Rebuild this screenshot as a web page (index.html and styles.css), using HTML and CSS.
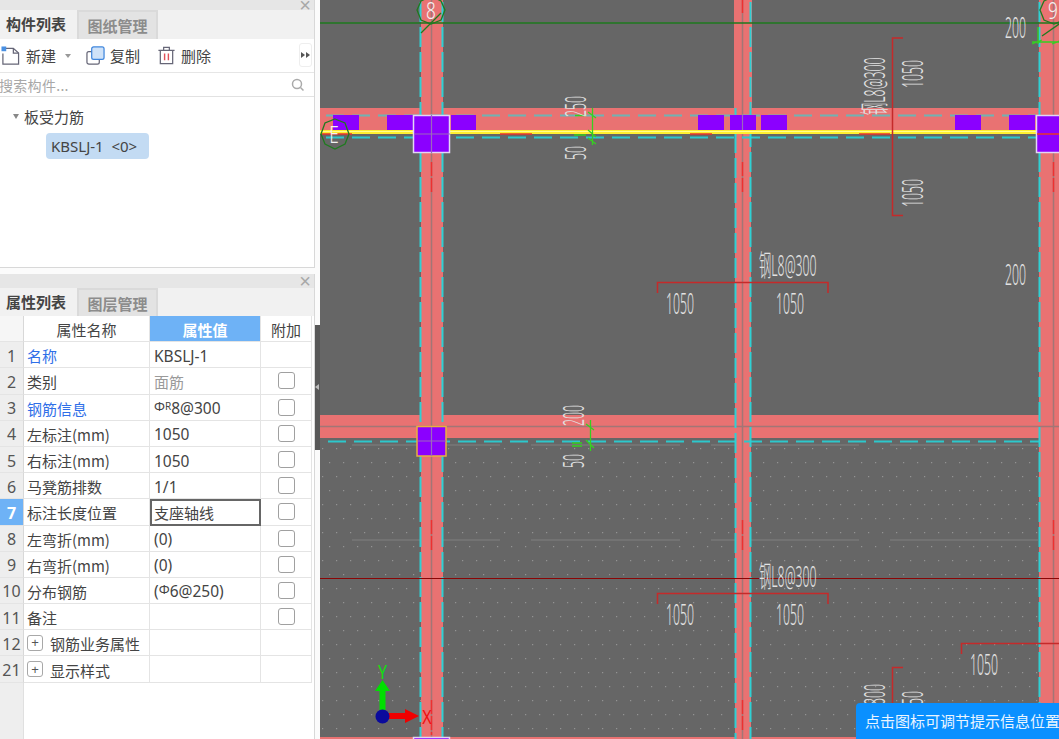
FILE: index.html
```html
<!DOCTYPE html>
<html lang="zh">
<head>
<meta charset="utf-8">
<title>构件列表</title>
<link rel="stylesheet" href="styles.css">
</head>
<body>
<div class="app">
  <aside class="side">
    <section class="panel panel-top">
      <div class="panel-head"><span class="close">×</span></div>
      <div class="tabs">
        <span class="tab active">构件列表</span>
        <span class="tab">图纸管理</span>
      </div>
      <div class="toolbar">
        <span class="tool tool-new">
          <svg class="ico" viewBox="0 0 20 20"><path class="ln" d="M3 2.500H13L18.500 7.500V19H2V8"/><path class="ln" d="M13 2.500V7.500H18.500"/><rect class="mark" x="0.500" y="0.500" width="5" height="5"/></svg>
          <span>新建</span><span class="caret"></span>
        </span>
        <span class="tool tool-copy">
          <svg class="ico" viewBox="0 0 20 20"><rect class="ln" x="1" y="6" width="13" height="13" rx="2"/><rect class="copyfront" x="6" y="1" width="13" height="13" rx="2"/></svg>
          <span>复制</span>
        </span>
        <span class="tool tool-del">
          <svg class="ico" viewBox="0 0 20 20"><path class="ln" d="M1.500 4.500H18.500M7 4.500V1.500H13V4.500M3.500 4.500V18.500H16.500V4.500"/><path class="bars" d="M8 8V15M12 8V15"/></svg>
          <span>删除</span>
        </span>
        <span class="more"><i class="mtri"></i><i class="mtri"></i></span>
      </div>
      <div class="search">
        <span>搜索构件...</span>
        <svg class="search-ico" viewBox="0 0 14 14"><circle cx="6" cy="6" r="4.500"/><path d="M9.500 9.500L12.500 12.500"/></svg>
      </div>
      <div class="tree">
        <div class="tree-root"><span class="tri"></span>板受力筋</div>
        <div class="chip">KBSLJ-1 &nbsp;&lt;0&gt;</div>
      </div>
    </section>

    <section class="panel panel-bottom">
      <div class="panel-head"><span class="close">×</span></div>
      <div class="tabs">
        <span class="tab active">属性列表</span>
        <span class="tab">图层管理</span>
      </div>
      <div class="props">
        <div class="grid">
          <div class="c num head"></div><div class="c hname">属性名称</div><div class="c hval">属性值</div><div class="c hadd">附加</div>

          <div class="c num">1</div><div class="c name blue">名称</div><div class="c val">KBSLJ-1</div><div class="c add"></div>
          <div class="c num">2</div><div class="c name">类别</div><div class="c val muted">面筋</div><div class="c add"><i class="cb"></i></div>
          <div class="c num">3</div><div class="c name blue">钢筋信息</div><div class="c val"><span class="rebar">Φ</span><sup class="rsup">R</sup>8@300</div><div class="c add"><i class="cb"></i></div>
          <div class="c num">4</div><div class="c name">左标注(mm)</div><div class="c val">1050</div><div class="c add"><i class="cb"></i></div>
          <div class="c num">5</div><div class="c name">右标注(mm)</div><div class="c val">1050</div><div class="c add"><i class="cb"></i></div>
          <div class="c num">6</div><div class="c name">马凳筋排数</div><div class="c val">1/1</div><div class="c add"><i class="cb"></i></div>
          <div class="c num sel">7</div><div class="c name">标注长度位置</div><div class="c val focus">支座轴线</div><div class="c add"><i class="cb"></i></div>
          <div class="c num">8</div><div class="c name">左弯折(mm)</div><div class="c val">(0)</div><div class="c add"><i class="cb"></i></div>
          <div class="c num">9</div><div class="c name">右弯折(mm)</div><div class="c val">(0)</div><div class="c add"><i class="cb"></i></div>
          <div class="c num">10</div><div class="c name">分布钢筋</div><div class="c val">(<span class="rebar">Φ</span>6@250)</div><div class="c add"><i class="cb"></i></div>
          <div class="c num">11</div><div class="c name">备注</div><div class="c val"></div><div class="c add"><i class="cb"></i></div>
          <div class="c num">12</div><div class="c name"><i class="plus">+</i><span class="grp">钢筋业务属性</span></div><div class="c val"></div><div class="c add"></div>
          <div class="c num">21</div><div class="c name"><i class="plus">+</i><span class="grp">显示样式</span></div><div class="c val"></div><div class="c add"></div>
        </div>
        <div class="gutter"></div>
      </div>
    </section>
    <div class="handle"><span class="handle-arrow"></span></div>
  </aside>

  <main class="canvas">
    <svg class="cad" viewBox="320 0 739 739" width="739" height="739">
      <defs>
        <pattern id="dots" width="14" height="28" patternUnits="userSpaceOnUse" x="320" y="448">
          <rect class="dot" x="2" y="0" width="1.200" height="1.200"/>
          <rect class="dot" x="9" y="14" width="1.200" height="1.200"/>
        </pattern>
      </defs>
      <rect class="bg" x="320" y="0" width="739" height="739"/>
      <rect x="320" y="445" width="739" height="294" fill="url(#dots)"/>
      <path class="faint" d="M352 445H500M531 445H680M711 445H859M890 445H1038M352 540H500M531 540H680M711 540H859M890 540H1038"/>

      <!-- beams -->
      <rect class="beam" x="320" y="108" width="739" height="23"/>
      <rect class="beam" x="320" y="415" width="739" height="23"/>
      <rect class="beam" x="421" y="0" width="22" height="739"/>
      <rect class="beam" x="734" y="0" width="18" height="108"/>
      <rect class="beam" x="735" y="108" width="16" height="631"/>
      <rect class="beam" x="1039" y="0" width="20" height="739"/>
      <rect class="beam" x="320" y="737" width="739" height="2"/>
      <path class="axis-gray" d="M431.500 0V739M742.500 0V739M1053.500 0V739"/>
      <path class="axis-gray" d="M320 426.500H1059"/>

      <!-- dashed edges -->
      <path class="dash-soft" d="M326 115.500H1036"/>
      <path class="dash" d="M326 137.500H1036M328 441.500H1039"/>
      <path class="dash-v" d="M420.500 2V739M442.500 2V739M735.500 108V739M750.500 2V739M1039.500 2V739"/>

      <!-- rebar marks -->
      <path class="red-dash" d="M431.500 162V192M431.500 520V552M431.500 700V735M742.500 0V13M742.500 162V192M742.500 520V552M742.500 700V730M1053.500 162V192M1053.500 520V552"/>

      <!-- yellow line -->
      <rect class="yellow" x="320" y="130" width="739" height="4"/>
      <rect class="yellow-in" x="320" y="131" width="739" height="1"/>
      <path class="red-line" d="M322 134H352M500 134H532M690 134H712M859 134H890"/>

      <!-- purple blocks -->
      <rect class="pu" x="333" y="115" width="26" height="15"/>
      <rect class="pu" x="387" y="115" width="26" height="15"/>
      <rect class="pu" x="451" y="115" width="25" height="15"/>
      <rect class="pu" x="698" y="115" width="26" height="15"/>
      <rect class="pu" x="730" y="115" width="26" height="15"/>
      <rect class="pu" x="761" y="115" width="26" height="15"/>
      <rect class="pu" x="955" y="115" width="26" height="15"/>
      <rect class="pu" x="1009" y="115" width="26" height="15"/>
      <rect class="pu-big" x="413.500" y="115.500" width="36" height="37"/>
      <rect class="pu-big" x="1036.500" y="115.500" width="30" height="37"/>
      <rect class="pu-org" x="417" y="426.500" width="29" height="29.500"/>
      <rect class="pu-big" x="413.500" y="737.500" width="36" height="10"/>
      <path class="pu-cross" d="M431.500 115V153M414 134H450M431.500 427V456M418 441H446M742.500 115V130"/>
      <path class="red-line" d="M1037 134H1059"/>

      <!-- grid lines -->
      <path class="green-line" d="M320 23H1059"/>
      <path class="darkred-line" d="M320 578.500H1059"/>

      <!-- axis bubbles -->
      <polygon class="bubble" points="431,-4 441,1 445,10 441,20 431,24 421,20 417,10 421,1"/>
      <path class="bubble" d="M441 13L421 33"/>
      <text class="cad-t bub" transform="translate(431 19) scale(.75 1)" text-anchor="middle">8</text>
      <polygon class="bubble" points="1054,-4 1064,1 1068,10 1064,20 1054,24 1044,20 1040,10 1044,1"/>
      <path class="bubble" d="M1062 22L1042 36"/>
      <text class="cad-t bub" transform="translate(1053 19) scale(.75 1)" text-anchor="middle">9</text>
      <polygon class="bubble" points="335,119 345,123 349,134 345,144 335,149 325,144 321,134 325,123"/>
      <text class="cad-t bub" transform="translate(334 143) scale(.75 1)" text-anchor="middle">E</text>

      <!-- green marks -->
      <path class="tick" d="M592.500 108V145M588 112L596 118M588 130L596 137M588 138L596 144M575 115.500H586M574 135H586"/>
      <path class="tick" d="M590.500 420V451M586 424L594 430M586 440L594 448M572 443H582M572 446H582"/>
      <path class="tick" d="M1038 27V44M1071 27V44M1032 44L1042 40M1052 44L1062 40M1032 42H1059"/>

      <!-- red brackets -->
      <path class="bracket" d="M903 38H892.500V215.500H903"/>
      <path class="bracket" d="M657.500 293V282.500H828V293"/>
      <path class="bracket" d="M657.500 604V593.500H828V604"/>
      <path class="bracket" d="M961.500 654V643.500H1059"/>
      <path class="bracket" d="M903 667.500H892.500V710"/>

      <!-- annotations -->
      <text class="cad-t" transform="translate(586 117) rotate(-90) scale(.41 1)">250</text>
      <text class="cad-t" transform="translate(586 160) rotate(-90) scale(.41 1)">50</text>
      <text class="cad-t" transform="translate(584 426) rotate(-90) scale(.41 1)">200</text>
      <text class="cad-t" transform="translate(584 468) rotate(-90) scale(.41 1)">50</text>
      <text class="cad-t" transform="translate(1005 38) scale(.41 1)">200</text>
      <text class="cad-t" transform="translate(1005 285) scale(.41 1)">200</text>
      <text class="cad-t" transform="translate(885 115) rotate(-90) scale(.41 1)">钢L8@300</text>
      <text class="cad-t" transform="translate(923 88) rotate(-90) scale(.41 1)">1050</text>
      <text class="cad-t" transform="translate(923 207) rotate(-90) scale(.41 1)">1050</text>
      <text class="cad-t" transform="translate(759 276) scale(.41 1)">钢L8@300</text>
      <text class="cad-t" transform="translate(666 314) scale(.41 1)">1050</text>
      <text class="cad-t" transform="translate(776 314) scale(.41 1)">1050</text>
      <text class="cad-t" transform="translate(759 587) scale(.41 1)">钢L8@300</text>
      <text class="cad-t" transform="translate(666 625) scale(.41 1)">1050</text>
      <text class="cad-t" transform="translate(776 625) scale(.41 1)">1050</text>
      <text class="cad-t" transform="translate(970 675) scale(.41 1)">1050</text>
      <text class="cad-t" transform="translate(885 705) rotate(-90) scale(.41 1)">800</text>
      <text class="cad-t" transform="translate(923 705) rotate(-90) scale(.41 1)">50</text>

      <!-- UCS -->
      <path class="ucs-g" d="M379.500 710V691H375L382.500 680L390 691H385.500V710Z"/>
      <path class="ucs-r" d="M388 713H405V709L419 716L405 723V719H388Z"/>
      <circle class="ucs-o" cx="382.500" cy="716.500" r="7"/>
      <text class="ucs-y" transform="translate(382.500 679) scale(.8 1)" text-anchor="middle">Y</text>
      <text class="ucs-x" transform="translate(427 724) scale(.8 1)" text-anchor="middle">X</text>
    </svg>
    <div class="hint">点击图标可调节提示信息位置</div>
  </main>
</div>
</body>
</html>
```
FILE: styles.css
```css
* { box-sizing: border-box; }
html, body { margin: 0; padding: 0; height: 100%; overflow: hidden; }
body {
  font-family: "Noto Sans CJK SC", "Noto Sans", sans-serif;
  font-size: 15px;
  color: #444;
  background: #fff;
}
.app { display: flex; width: 1059px; height: 739px; }

/* side column */
.side {
  position: relative;
  width: 320px;
  flex: none;
  display: flex;
  flex-direction: column;
  gap: 6px;
  padding-right: 5px;
  background: #fbfbfb;
}
.panel {
  border-right: 1px solid #d8d8d8;
  background: #fff;
  display: flex;
  flex-direction: column;
}
.panel-top { height: 268px; border-bottom: 1px solid #d8d8d8; }
.panel-bottom { flex: 1; min-height: 0; }
.panel-head {
  height: 10px;
  background: #e6e6e6;
  display: flex;
  justify-content: flex-end;
  align-items: center;
  padding-right: 3px;
  overflow: hidden;
}
.panel-bottom .panel-head { height: 14px; }
.close { color: #a8a8a8; font: 20px/10px "Liberation Sans", sans-serif; }

.tabs {
  height: 29px;
  background: #f1f1f1;
  display: flex;
  flex: none;
}
.panel-bottom .tabs { height: 28px; }
.tab {
  width: 81px;
  border: 2px solid #dadada;
  border-bottom: 0;
  background: #e3e3e3;
  color: #8c8c8c;
  font-weight: 700;
  font-size: 15px;
  line-height: 27px;
  text-align: center;
}
.tab.active {
  width: 77px;
  border: 0;
  padding-left: 6px;
  background: transparent;
  color: #444;
  text-align: left;
}

.toolbar {
  height: 34px;
  display: flex;
  align-items: center;
  position: relative;
  border-bottom: 1px solid #e6e6e6;
  flex: none;
}
.tool { display: flex; align-items: center; gap: 5px; }
.tool-new { margin-left: 1px; gap: 6px; }
.tool-copy { margin-left: 15px; }
.tool-del { margin-left: 17px; }
.ico { width: 19px; height: 19px; flex: none; }
.ln { fill: none; stroke: #667; stroke-width: 1.300; }
.mark { fill: #4a90e2; }
.copyfront { fill: #cfe2f8; stroke: #3f86dd; stroke-width: 1.300; }
.bars { fill: none; stroke: #e0505a; stroke-width: 1.500; }
.caret {
  width: 0; height: 0;
  margin-left: 3px;
  border: 3px solid transparent;
  border-top: 4px solid #999;
  border-bottom: 0;
}
.more {
  position: absolute;
  right: 2px;
  top: 4px;
  width: 13px;
  height: 24px;
  border: 1px solid #eee;
  border-radius: 3px;
  background: #fff;
  display: flex;
  align-items: center;
  justify-content: center;
  gap: 1px;
}
.mtri {
  width: 0; height: 0;
  border: 3px solid transparent;
  border-left: 4px solid #555;
  border-right: 0;
}

.search {
  height: 24px;
  display: flex;
  align-items: center;
  justify-content: space-between;
  padding-right: 9px;
  font-size: 14px;
  color: #a8a8a8;
  border-bottom: 1px solid #e2e2e2;
  flex: none;
}
.search span { margin-left: -1px; letter-spacing: .3px; }
.search-ico { width: 14px; height: 14px; fill: none; stroke: #aaa; stroke-width: 1.500; }

.tree { padding-top: 8px; flex: 1; }
.tree-root { display: flex; align-items: center; height: 22px; padding-left: 13px; }
.tri {
  width: 0; height: 0;
  margin-right: 5px;
  border: 3.500px solid transparent;
  border-top: 5px solid #888;
  border-bottom: 0;
}
.chip {
  margin: 6px 0 0 46px;
  width: 103px;
  height: 26px;
  background: #c3dbf3;
  border-radius: 4px;
  padding-left: 5px;
  line-height: 26px;
  font-family: "Noto Sans", sans-serif;
  font-size: 15px;
  white-space: nowrap;
}

/* property grid */
.props { flex: 1; min-height: 0; display: flex; flex-direction: column; background: #fff; }
.grid {
  display: grid;
  grid-template-columns: 24px 126px 111px 51px;
  grid-auto-rows: 26.200px;
  width: 312px;
  flex: none;
}
.c {
  display: flex;
  align-items: center;
  min-width: 0;
  padding-top: 2px;
  border-right: 1.500px solid #e4e4e4;
  border-bottom: 1.500px solid #e4e4e4;
  white-space: nowrap;
  font-size: 15px;
}
.num {
  background: #eeeeee;
  justify-content: center;
  font-family: "Noto Sans", sans-serif;
  font-size: 16px;
  border-right: 1.500px solid #d8d8d8;
  color: #555;
}
.num.head { background: #f6f6f6; }
.num.sel { background: #6eb2f6; color: #fff; font-weight: 700; }
.hname, .hadd { justify-content: center; }
.hval { justify-content: center; background: #6eb2f6; color: #fff; font-weight: 700; }
.name { padding-left: 3px; }
.blue { color: #2f6fe8; }
.val { padding-left: 4px; font-family: "Noto Sans", "Noto Sans CJK SC", sans-serif; font-size: 15.500px; }
.muted { color: #9a9a9a; font-size: 15px; }
.focus { border: 2px solid #666; padding: 0 0 0 2px; font-size: 15px; }
.add { justify-content: center; padding-top: 0; }
.cb {
  width: 17px; height: 17px;
  border: 1.500px solid #a0a0a0;
  border-radius: 3px;
  background: #fff;
}
.plus {
  width: 16px; height: 16px;
  margin-top: -2px;
  border: 1.500px solid #a8a8a8;
  border-radius: 3px;
  display: flex;
  align-items: center;
  justify-content: center;
  font: 13px/1 "Liberation Sans", sans-serif;
  color: #555;
  flex: none;
}
.grp { margin-left: 7px; }
.rebar { font-size: 13px; position: relative; top: -2px; }
.rsup { font-size: 10px; line-height: 0; position: relative; top: -2px; }
.gutter { width: 24px; flex: 1; background: #eeeeee; border-right: 1.500px solid #e0e0e0; }

.handle {
  position: absolute;
  right: 0;
  top: 325px;
  width: 5px;
  height: 125px;
  background: #585858;
  display: flex;
  align-items: center;
}
.handle-arrow {
  width: 0; height: 0;
  border: 3px solid transparent;
  border-right: 4px solid #bbb;
  border-left: 0;
  margin-top: -2px;
}

/* canvas */
.canvas { position: relative; width: 739px; height: 739px; overflow: hidden; background: #666; }
.cad { display: block; }
.bg { fill: #666; }
.dot { fill: #939393; }
.faint { stroke: #787878; stroke-width: 1.500; fill: none; }
.beam { fill: #e97272; }
.axis-gray { stroke: #a27676; stroke-width: 1.500; fill: none; }
.dash-soft { stroke: #6fb3b3; stroke-width: 2; fill: none; stroke-dasharray: 18 8; }
.dash { stroke: #2cc8cc; stroke-width: 2; fill: none; stroke-dasharray: 18 8; }
.dash-v { stroke: #2fd0d4; stroke-width: 2; fill: none; stroke-dasharray: 20 5; }
.red-dash { stroke: #ee3030; stroke-width: 1.500; fill: none; stroke-dasharray: 14 2; }
.yellow { fill: #ffee30; }
.yellow-in { fill: #ffff90; }
.red-line { stroke: #e8352a; stroke-width: 1.500; fill: none; }
.pu { fill: #8b00ff; }
.pu-big { fill: #8b00ff; stroke: #e3d7f5; stroke-width: 1.500; }
.pu-org { fill: #8b00ff; stroke: #e8b040; stroke-width: 1.500; }
.pu-cross { stroke: #9c68bc; stroke-width: 1.200; fill: none; }
.green-line { stroke: #1e7a1e; stroke-width: 1.500; fill: none; }
.darkred-line { stroke: #8a0606; stroke-width: 1.200; fill: none; }
.bubble { stroke: #1f7a1f; stroke-width: 1.300; fill: none; }
.tick { stroke: #35d020; stroke-width: 1.300; fill: none; }
.bracket { stroke: #c52a2a; stroke-width: 1.500; fill: none; }
.cad-t {
  font-family: "Noto Sans", "Noto Sans CJK SC", sans-serif;
  font-size: 30px;
  font-weight: 300;
  fill: #e2e2e2;
}
.cad-t.bub { font-size: 23px; fill: #f2f2f2; }
.ucs-g { fill: #00e000; }
.ucs-r { fill: #f00000; }
.ucs-o { fill: #0a0a9c; }
.ucs-y { font: 20px "Noto Sans", sans-serif; fill: #10e010; }
.ucs-x { font: 20px "Noto Sans", sans-serif; fill: #f01010; }

.hint {
  position: absolute;
  left: 536px;
  top: 703px;
  width: 203px;
  height: 36px;
  background: #0a90ff;
  border-top-left-radius: 4px;
  color: #eaf5ff;
  font-size: 15px;
  line-height: 36px;
  padding-left: 9px;
  white-space: nowrap;
  overflow: hidden;
}
```
